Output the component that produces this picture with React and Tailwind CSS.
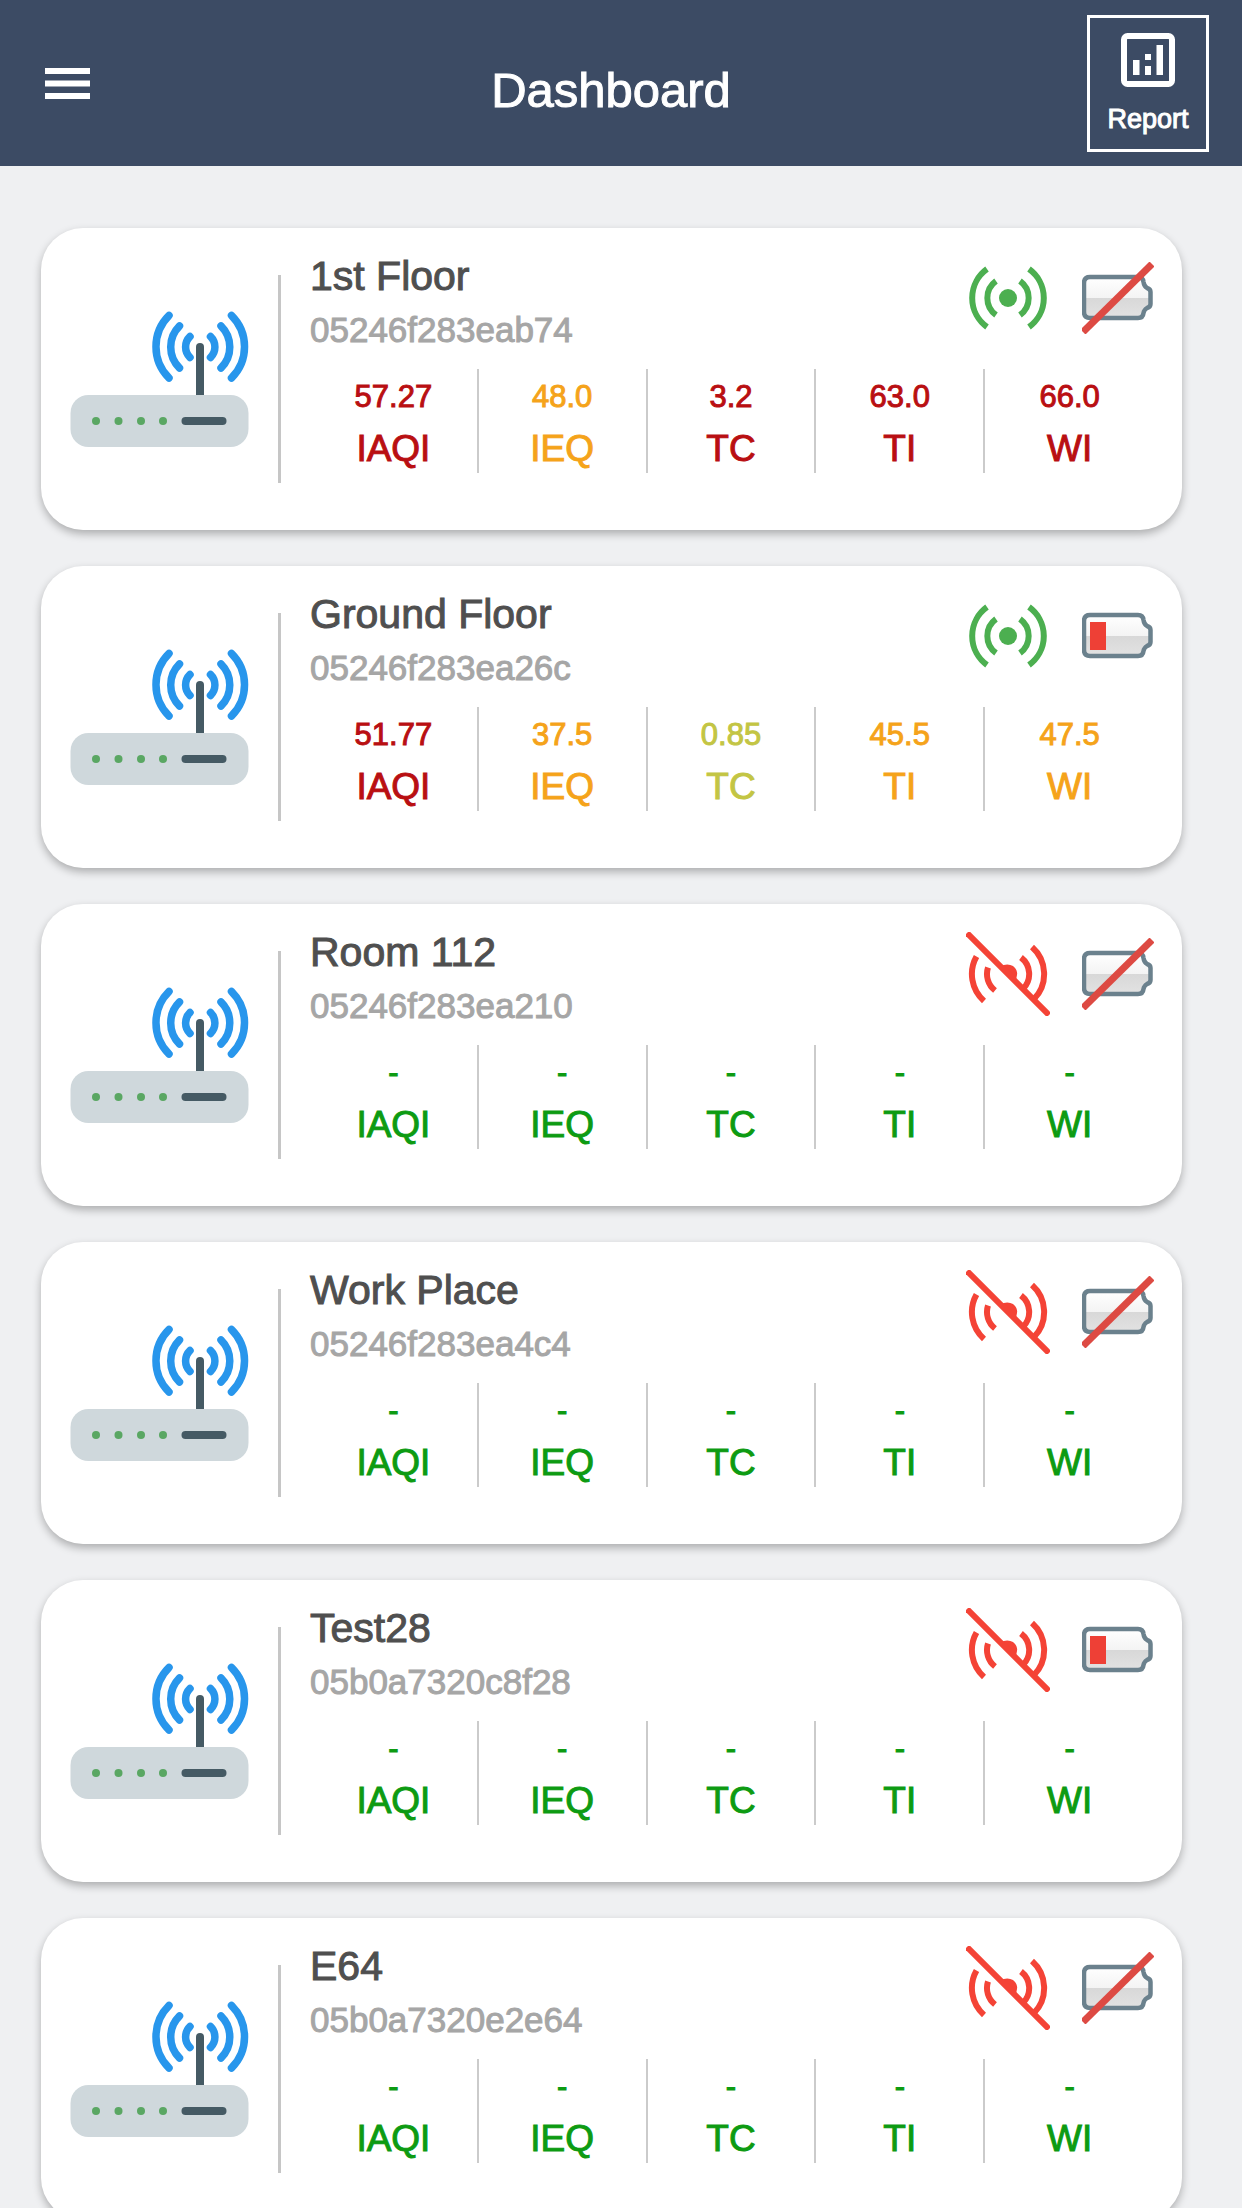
import React from 'react';

const devices = [
    {
        name: '1st Floor',
        id: '05246f283eab74',
        online: true,
        battery: 'none',
        metrics: [
            { label: 'IAQI', value: '57.27', level: 'bad' },
            { label: 'IEQ', value: '48.0', level: 'moderate' },
            { label: 'TC', value: '3.2', level: 'bad' },
            { label: 'TI', value: '63.0', level: 'bad' },
            { label: 'WI', value: '66.0', level: 'bad' },
        ],
    },
    {
        name: 'Ground Floor',
        id: '05246f283ea26c',
        online: true,
        battery: 'low',
        metrics: [
            { label: 'IAQI', value: '51.77', level: 'bad' },
            { label: 'IEQ', value: '37.5', level: 'moderate' },
            { label: 'TC', value: '0.85', level: 'fair' },
            { label: 'TI', value: '45.5', level: 'moderate' },
            { label: 'WI', value: '47.5', level: 'moderate' },
        ],
    },
    { name: 'Room 112', id: '05246f283ea210', online: false, battery: 'none' },
    { name: 'Work Place', id: '05246f283ea4c4', online: false, battery: 'none' },
    { name: 'Test28', id: '05b0a7320c8f28', online: false, battery: 'low' },
    { name: 'E64', id: '05b0a7320e2e64', online: false, battery: 'none' },
];

// Shown for devices that have not sent a reading
const emptyMetrics = ['IAQI', 'IEQ', 'TC', 'TI', 'WI'].map((label) => ({
    label,
    value: '-',
    level: 'good',
}));

const levelColors = {
    good: 'text-[#0d9b12]',
    fair: 'text-[#c3c544]',
    moderate: 'text-[#f5a31a]',
    bad: 'text-[#b90f12]',
};

function RouterIcon() {
    return (
        <svg
            viewBox="0 0 180 138"
            fill="none"
            className="w-[180px] h-[138px] shrink-0"
            aria-hidden="true"
        >
            <g stroke="#2896ec" strokeWidth="7.5" strokeLinecap="round">
                <path d="M99 5.5A44 44 0 0 0 99 68" />
                <path d="M109.5 16A29.5 29.5 0 0 0 109.5 58" />
                <path d="M120 26.5A14.7 14.7 0 0 0 120 47.5" />
                <path d="M140.5 26.5A14.7 14.7 0 0 1 140.5 47.5" />
                <path d="M151 16A29.5 29.5 0 0 1 151 58" />
                <path d="M161.5 5.5A44 44 0 0 1 161.5 68" />
            </g>
            <path d="M130 88V37" stroke="#455a64" strokeWidth="8" strokeLinecap="round" />
            <rect x="0.5" y="85" width="178" height="52" rx="18" fill="#cfd8dc" />
            <g fill="#5aa763">
                <circle cx="26" cy="111" r="4" />
                <circle cx="48.5" cy="111" r="4" />
                <circle cx="71" cy="111" r="4" />
                <circle cx="93" cy="111" r="4" />
            </g>
            <rect x="111.5" y="107" width="45" height="8" rx="4" fill="#455a64" />
        </svg>
    );
}

function SignalIcon({ online }) {
    if (online) {
        return (
            <svg
                viewBox="-42 -42 84 84"
                fill="none"
                stroke="#4caf50"
                strokeWidth="6"
                className="size-[84px]"
                role="img"
                aria-label="Online"
            >
                <circle r="9" fill="#4caf50" stroke="none" />
                <path d="M-12 -17A21 21 0 0 0 -12 17M12 -17A21 21 0 0 1 12 17" />
                <path d="M-21 -29A35.8 35.8 0 0 0 -21 29M21 -29A35.8 35.8 0 0 1 21 29" />
            </svg>
        );
    }

    return (
        <svg
            viewBox="-42 -42 84 84"
            fill="none"
            stroke="#f44336"
            strokeWidth="6"
            className="size-[84px]"
            role="img"
            aria-label="Offline"
        >
            <path d="M-8 -8Q0 -11 5 -8Q10 -4 9 1Q9 5 6 8Z" fill="#f44336" stroke="none" />
            <path d="M-20 -6.5A21 21 0 0 0 -13 16.5M13 -16.5A21 21 0 0 1 15 15" />
            <path d="M-31.5 -17.5A36 36 0 0 0 -24 27M24 -27A36 36 0 0 1 26 25" />
            <path d="M-41 -41L41 41" />
        </svg>
    );
}

function BatteryIcon({ status, gradientId }) {
    return (
        <svg
            viewBox="0 0 72 72"
            fill="none"
            className="size-[72px]"
            role="img"
            aria-label={status === 'low' ? 'Battery low' : 'No battery'}
        >
            <defs>
                <linearGradient id={gradientId} x1="0" y1="0" x2="0" y2="1">
                    <stop offset="0" stopColor="#ffffff" />
                    <stop offset="0.5" stopColor="#f4f4f4" />
                    <stop offset="0.52" stopColor="#d8d8d8" />
                    <stop offset="1" stopColor="#e2e2e2" />
                </linearGradient>
            </defs>
            <path
                d="M8 15H56Q61 15 61.5 20Q62 24 65 26Q68.5 27 68.5 30V42Q68.5 45 65 46Q62 48 61.5 51Q61 56 56 56H8Q2 56 2 50V21Q2 15 8 15Z"
                fill={`url(#${gradientId})`}
                stroke="#6b818d"
                strokeWidth="4.5"
            />
            {status === 'low' ? (
                <rect x="8" y="22" width="16" height="28" fill="#ee4036" />
            ) : (
                <path d="M1 70L70 2" stroke="#dd4a43" strokeWidth="7" />
            )}
        </svg>
    );
}

function DeviceCard({ device }) {
    const metrics = device.metrics || emptyMetrics;

    return (
        <article className="flex items-center bg-white rounded-[42px] pl-[29px] pr-7 shadow-[0_4px_8px_rgba(0,0,0,0.28)]">
            <RouterIcon />
            <div className="w-[3px] h-[208px] shrink-0 ml-7 mr-[29px] bg-[#c6c6c6]" />
            <div className="flex-1 min-w-0 pt-7 pb-[57px]">
                <div className="flex justify-between items-start">
                    <div>
                        <h2 className="text-[41px] leading-10 text-[#4f4f4f] [-webkit-text-stroke:1px]">
                            {device.name}
                        </h2>
                        <p className="mt-3.5 text-[35px] leading-10 text-[#a6a6a6] [-webkit-text-stroke:1px]">
                            {device.id}
                        </p>
                    </div>
                    <div className="flex items-center gap-8">
                        <SignalIcon online={device.online} />
                        <BatteryIcon
                            status={device.battery}
                            gradientId={`battery-${device.id}`}
                        />
                    </div>
                </div>

                {/* Air quality indices */}
                <dl className="grid grid-cols-5 mt-[19px] h-[104px] divide-x-2 divide-[#cbcbcb]">
                    {metrics.map((metric) => (
                        <div
                            key={metric.label}
                            className={`flex flex-col-reverse items-center justify-center gap-3 pt-1 [-webkit-text-stroke:1px] ${levelColors[metric.level]}`}
                        >
                            <dt className="text-[37px] leading-10">{metric.label}</dt>
                            <dd className="text-[31px] leading-10">{metric.value}</dd>
                        </div>
                    ))}
                </dl>
            </div>
        </article>
    );
}

function App() {
    return (
        <div className="h-screen flex flex-col overflow-hidden bg-[#eff0f2] font-['Liberation_Sans',Arial,sans-serif]">
            <header className="flex items-center h-[166px] shrink-0 pr-[33px] bg-[#3c4b64] text-white">
                <button type="button" className="px-[45px] py-6" aria-label="Open menu">
                    <svg viewBox="0 0 45 32" fill="currentColor" className="w-[45px] h-8">
                        <path d="M0 1h45v6H0zM0 13.5h45v6H0zM0 26h45v6H0z" />
                    </svg>
                </button>
                <h1 className="flex-1 pt-3.5 text-center text-[49px] leading-[56px] [-webkit-text-stroke:1px]">
                    Dashboard
                </h1>
                <button
                    type="button"
                    className="flex flex-col items-center w-[122px] h-[137px] pt-[15px] gap-4 border-3 border-white"
                >
                    <svg viewBox="0 0 54 54" className="size-[54px]" aria-hidden="true">
                        <rect
                            x="3"
                            y="3"
                            width="48"
                            height="48"
                            rx="3.5"
                            fill="none"
                            stroke="currentColor"
                            strokeWidth="6"
                        />
                        <path
                            d="M12 27h6.500v15H12zM24 21h6v6h-6zM24 33h6v9h-6zM35.500 12H42v30h-6.500z"
                            fill="currentColor"
                        />
                    </svg>
                    <span className="text-[27px] leading-8 [-webkit-text-stroke:1px]">
                        Report
                    </span>
                </button>
            </header>

            <main className="flex-1 min-h-0 overflow-y-auto [scrollbar-width:none] pt-[62px] pb-9 pl-[41px] pr-[60px]">
                <div className="flex flex-col gap-9">
                    {devices.map((device) => (
                        <DeviceCard key={device.id} device={device} />
                    ))}
                </div>
            </main>
        </div>
    );
}

export default App;
